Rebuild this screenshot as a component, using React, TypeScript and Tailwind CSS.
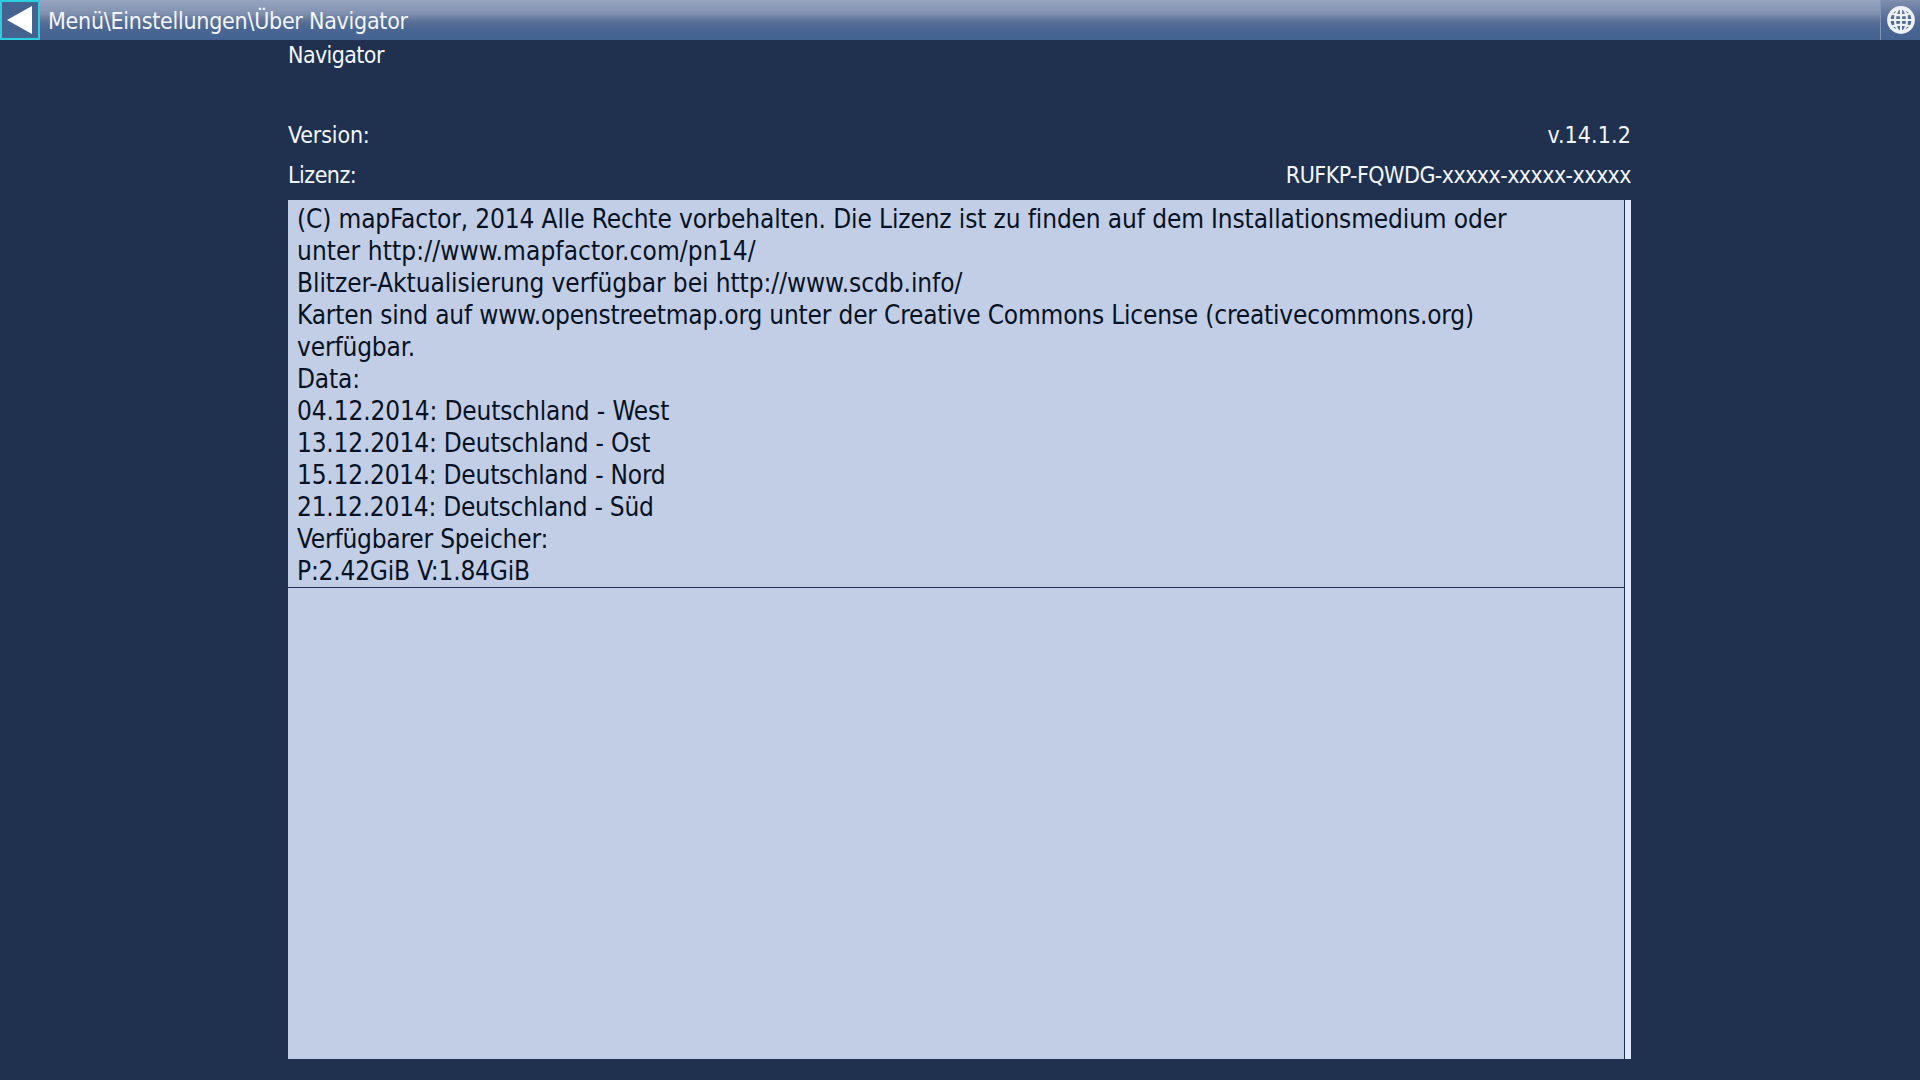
import React from "react";

const lines = [
  { text: "(C) mapFactor, 2014 Alle Rechte vorbehalten. Die Lizenz ist zu finden auf dem Installationsmedium oder", cls: "tracking-[-0.13px]" },
  { text: "unter http://www.mapfactor.com/pn14/", cls: "tracking-[0.1px]" },
  { text: "Blitzer-Aktualisierung verfügbar bei http://www.scdb.info/", cls: "tracking-[-0.07px]" },
  { text: "Karten sind auf www.openstreetmap.org unter der Creative Commons License (creativecommons.org)", cls: "tracking-[-0.19px]" },
  { text: "verfügbar.", cls: "" },
  { text: "Data:", cls: "" },
  { text: "04.12.2014: Deutschland - West", cls: "" },
  { text: "13.12.2014: Deutschland - Ost", cls: "tracking-[-0.2px]" },
  { text: "15.12.2014: Deutschland - Nord", cls: "tracking-[-0.22px]" },
  { text: "21.12.2014: Deutschland - Süd", cls: "tracking-[-0.25px]" },
  { text: "Verfügbarer Speicher:", cls: "tracking-[-0.2px]" },
  { text: "P:2.42GiB V:1.84GiB", cls: "tracking-[-0.2px]" },
];

function GlobeIcon() {
  return (
    <svg width="30" height="30" viewBox="0 0 30 30" fill="none" stroke="#eef2f6">
      <circle cx="15" cy="15" r="12.2" strokeWidth="3.4" />
      <ellipse cx="15" cy="15" rx="6" ry="12" strokeWidth="2.2" />
      <path d="M15 3v24M3.5 15h23M6 8.5c5 2.4 13 2.4 18 0M6 21.5c5-2.4 13-2.4 18 0" strokeWidth="2.2" />
    </svg>
  );
}

export default function App() {
  return (
    <div className="h-[1080px] w-[1920px] overflow-hidden bg-[#1f314f] font-['DejaVu_Sans_Condensed','DejaVu_Sans',sans-serif] text-[#f2f6fb]">
      <div className="flex h-10 items-stretch bg-[linear-gradient(180deg,#98a5c0_0%,#7f90af_35%,#5d7299_52%,#4a6794_70%,#456391_100%)]">
        <div className="flex w-10 items-center justify-center border-2 border-[#2ccfe0] bg-[#456391]">
          <svg width="26" height="30" viewBox="0 0 26 30">
            <path d="M0 15 25 1v28z" fill="#ffffff" />
          </svg>
        </div>
        <div className="ml-2 flex-1 pt-px text-[23px] leading-10 tracking-[-0.26px]">Menü\Einstellungen\Über Navigator</div>
        <div className="flex w-10 items-center justify-center border-l border-[#7f95bb] bg-[linear-gradient(180deg,#7f90b0_0%,#4d6793_55%,#456391_100%)]">
          <GlobeIcon />
        </div>
      </div>
      <div className="ml-[288px] w-[1343px] text-[23px]">
        <div className="h-[75px] leading-[30px] tracking-[-0.6px]">Navigator</div>
        <div className="flex h-10 items-center justify-between">
          <span className="tracking-[-0.15px]">Version:</span>
          <span className="tracking-[0.1px]">v.14.1.2</span>
        </div>
        <div className="flex h-10 items-center justify-between">
          <span className="tracking-[-0.5px]">Lizenz:</span>
          <span className="tracking-[-0.55px]">RUFKP-FQWDG-xxxxx-xxxxx-xxxxx</span>
        </div>
        <div className="mt-[5px] flex h-[859px]">
          <div className="flex-1 bg-[#c1cee6] text-[#081222]">
            <div className="border-b border-[#1f314f] pl-[9px] pt-[3px] text-[26px] leading-8 tracking-[-0.15px]">
              {lines.map((line) => (
                <div key={line.text} className={"whitespace-nowrap " + line.cls}>{line.text}</div>
              ))}
            </div>
          </div>
          <div className="w-[7px] border-l border-[#1f314f] bg-[#dfe9fb]" />
        </div>
      </div>
    </div>
  );
}
